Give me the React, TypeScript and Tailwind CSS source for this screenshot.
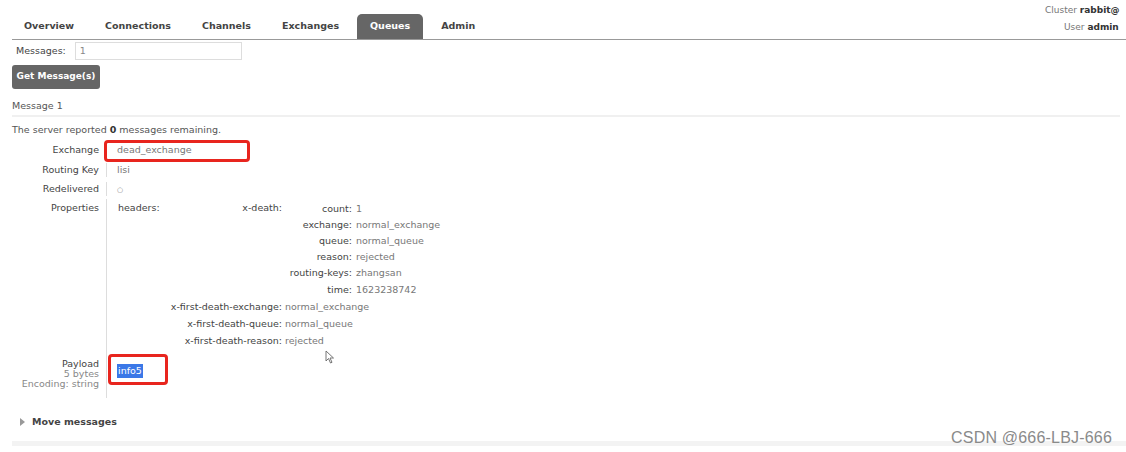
import React from 'react';

const tabs = ['Overview', 'Connections', 'Channels', 'Exchanges', 'Queues', 'Admin'];

const deathRows: [string, string][] = [
  ['count:', '1'],
  ['exchange:', 'normal_exchange'],
  ['queue:', 'normal_queue'],
  ['reason:', 'rejected'],
  ['routing-keys:', 'zhangsan'],
  ['time:', '1623238742']
];

const firstDeath: [string, string][] = [
  ['x-first-death-exchange:', 'normal_exchange'],
  ['x-first-death-queue:', 'normal_queue'],
  ['x-first-death-reason:', 'rejected']
];

function Label({ children }: { children: React.ReactNode }) {
  return (
    <div className="w-[95px] shrink-0 pr-[7px] text-right text-[#444] border-r border-[#ddd]">
      {children}
    </div>
  );
}

export default function App() {
  return (
    <div
      className="relative w-[1126px] h-[452px] overflow-hidden bg-white text-[9.5px] text-[#555]"
      style={{ fontFamily: '"DejaVu Sans", Verdana, sans-serif' }}
    >
      {/* Header / tabs */}
      <div className="ml-[12px] flex h-[40px] border-b border-[#999]">
        <div className="flex items-end gap-[5px] -ml-[1px]">
          {tabs.map(tab => (
            <div
              key={tab}
              className={`h-[25px] px-[13px] flex items-center font-bold rounded-t-[5px] ${
                tab === 'Queues' ? 'bg-[#666] text-white' : 'text-[#444]'
              }`}
            >
              {tab}
            </div>
          ))}
        </div>
        <div className="flex-1" />
        <div className="w-[81px] shrink-0 whitespace-nowrap text-[#777] pt-[2px] leading-[17px] text-[9px]">
          <div>
            Cluster <span className="font-bold text-[#333]">rabbit@</span>
          </div>
          <div className="pl-[19px]">
            User <span className="font-bold text-[#333]">admin</span>
          </div>
        </div>
      </div>

      {/* Messages input */}
      <div className="ml-[16px] mt-[2px] flex items-center h-[18px]">
        <span className="text-[#444]">Messages:</span>
        <div className="ml-[9px] w-[167px] h-[18px] border border-[#ddd] pl-[4px] flex items-center text-[#888]">
          1
        </div>
      </div>

      <button className="ml-[12px] mt-[5px] h-[24px] w-[88px] rounded-[3px] bg-[#666] text-white font-bold text-[9px]">
        Get Message(s)
      </button>

      <div className="ml-[12px] mr-[6px] mt-[10px] pb-[2px] border-b-2 border-[#f0f0f0] text-[#555]">
        Message 1
      </div>

      <div className="ml-[12px] mt-[6px]">
        The server reported <b className="text-[#333]">0</b> messages remaining.
      </div>

      {/* Message details */}
      <div className="ml-[12px] mt-[3px]">
        <div className="relative flex h-[20px] items-center">
          <Label>Exchange</Label>
          <div className="pl-[10px] text-[#777]">dead_exchange</div>
          <div className="absolute left-[92px] top-[-1px] w-[146px] h-[22px] border-[3px] border-[#e8251e] rounded-[4px]" />
        </div>
        <div className="flex h-[19px] items-center">
          <Label>Routing Key</Label>
          <div className="pl-[10px] text-[#777]">lisi</div>
        </div>
        <div className="flex h-[19px] items-center">
          <Label>Redelivered</Label>
          <div className="pl-[10px] text-[#888] text-[7px] pt-[3px]">○</div>
        </div>
        <div className="flex">
          <Label>
            <div className="pt-[2px]">Properties</div>
          </Label>
          <div className="pl-[11px] pt-[2px] flex">
            <div className="w-[48px] text-[#444]">headers:</div>
            <div className="grid grid-cols-[116px_auto] gap-x-[3px]">
              <div className="text-right text-[#444]">x-death:</div>
              <div className="grid grid-cols-[67px_auto] gap-x-[4px] leading-[16.2px]">
                {deathRows.map(([k, v]) => (
                  <React.Fragment key={k}>
                    <div className="text-right text-[#444]">{k}</div>
                    <div className="text-[#777]">{v}</div>
                  </React.Fragment>
                ))}
              </div>
              {firstDeath.map(([k, v]) => (
                <React.Fragment key={k}>
                  <div className="text-right text-[#444] leading-[16px] pt-[1px]">{k}</div>
                  <div className="text-[#777] leading-[16px] pt-[1px]">{v}</div>
                </React.Fragment>
              ))}
            </div>
          </div>
        </div>
        <div className="relative flex">
          <Label>
            <div className="pt-[10px] pb-[9px] leading-[10px]">
              <div className="text-[#444]">Payload</div>
              <div className="text-[#888]">5 bytes</div>
              <div className="text-[#888]">Encoding: string</div>
            </div>
          </Label>
          <div className="pl-[10px] pt-[15px]">
            <span className="bg-[#3b78e7] text-white px-[1px] leading-[14px] inline-block">info5</span>
          </div>
          <div className="absolute left-[96px] top-[5px] w-[60px] h-[31px] border-[3px] border-[#e8251e] rounded-[4px]" />
          {/* mouse cursor */}
          <svg className="absolute left-[313px] top-[1px]" width="10" height="14" viewBox="0 0 10 14">
            <path d="M1 1 L1 11 L3.5 8.5 L5.5 13 L7 12.3 L5 8 L8.5 8 Z" fill="white" stroke="#666" strokeWidth="0.9" />
          </svg>
        </div>
      </div>

      {/* Move messages */}
      <div className="ml-[20px] mt-[17px] flex items-center gap-[7px]">
        <svg width="5" height="8" viewBox="0 0 5 8">
          <path d="M0 0 L5 4 L0 8 Z" fill="#999" />
        </svg>
        <span className="font-bold text-[#444]">Move messages</span>
      </div>
      <div className="ml-[12px] mt-[12px] h-[5px] bg-[#f3f3f3]" />

      {/* watermark */}
      <div
        className="absolute left-[951px] top-[426px] text-[16px] text-[#8a8a8a] tracking-[0.2px]"
        style={{ fontFamily: '"Liberation Sans", Arial, sans-serif' }}
      >
        CSDN @666-LBJ-666
      </div>
    </div>
  );
}
